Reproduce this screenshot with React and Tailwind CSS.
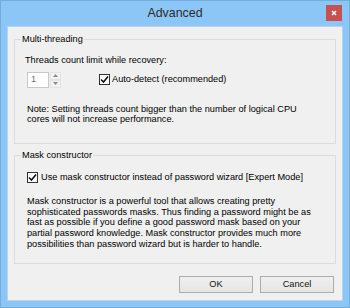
import React from "react";

const font = { fontFamily: '"Liberation Sans", Arial, sans-serif' };

const CheckBox = () => (
  <span className="w-[11px] h-[11px] border border-[#333333] bg-white flex items-center justify-center shrink-0">
    <svg width="9" height="9" viewBox="0 0 9 9">
      <path d="M1 4.5 L3.5 7 L8 1.5" fill="none" stroke="#111" strokeWidth="1.6" />
    </svg>
  </span>
);

const Spinner = () => (
  <div className="flex items-stretch h-[16px]">
    <div className="w-[22px] bg-white border border-[#c5c7cc] text-[#6d6d6d] pl-[3px] flex items-center">1</div>
    <div className="w-[11px] flex flex-col ml-[1px]">
      <div className="flex-1 flex items-center justify-center border border-[#e3e3e3] bg-[#f3f3f3]">
        <svg width="5" height="3" viewBox="0 0 5 3"><path d="M0 3 L2.5 0 L5 3 Z" fill="#8a8a8a" /></svg>
      </div>
      <div className="flex-1 flex items-center justify-center border border-[#e3e3e3] bg-[#f3f3f3]">
        <svg width="5" height="3" viewBox="0 0 5 3"><path d="M0 0 L2.5 3 L5 0 Z" fill="#8a8a8a" /></svg>
      </div>
    </div>
  </div>
);

const Button = ({ children }) => (
  <button className="w-[74px] h-[17px] border border-[#acacac] bg-gradient-to-b from-[#f0f0f0] to-[#e5e5e5] text-[#111] flex items-center justify-center">
    {children}
  </button>
);

export default function App() {
  return (
    <div
      style={font}
      className="w-[350px] h-[308px] bg-[#8cc6f6] border border-[#74acdc] flex flex-col text-[9.2px] leading-[10.8px] text-black"
    >
      {/* title bar */}
      <div className="h-[25px] grid grid-cols-[1fr_auto_1fr] items-start">
        <div />
        <div className="text-[12.4px] text-[#2b2b2b] leading-[25px]">Advanced</div>
        <div className="flex justify-end pr-[7px] pt-[4px]">
          <div className="w-[16px] h-[16px] bg-[#c75050] flex items-center justify-center">
            <svg width="6" height="6" viewBox="0 0 6 6">
              <path d="M1 1 L5 5 M5 1 L1 5" stroke="#fff" strokeWidth="1.5" />
            </svg>
          </div>
        </div>
      </div>

      {/* client area */}
      <div className="mx-[6px] h-[275px] bg-[#f0f0f0] border border-[#b9d3ea] flex flex-col px-[6px]">
        <fieldset className="mt-[7px] border border-[#dcdcdc] px-[6px] h-[110px]">
          <legend className="px-[1px] text-black">Multi-threading</legend>
          <div className="px-[6px] pt-[10px]">
            <div className="-ml-[2px]">Threads count limit while recovery:</div>
            <div className="flex items-center mt-[6px]">
              <Spinner />
              <div className="ml-[38px] flex items-center gap-[2px]">
                <CheckBox />
                <span>Auto-detect (recommended)</span>
              </div>
            </div>
            <p className="mt-[16px]">
              Note: Setting threads count bigger than the number of logical CPU
              <br />
              cores will not increase performance.
            </p>
          </div>
        </fieldset>

        <fieldset className="mt-[6px] border border-[#dcdcdc] px-[6px] h-[114px]">
          <legend className="px-[1px] text-black">Mask constructor</legend>
          <div className="px-[6px] pt-[11px]">
            <div className="flex items-center gap-[3px]">
              <CheckBox />
              <span>Use mask constructor instead of password wizard [Expert Mode]</span>
            </div>
            <p className="mt-[13px]">
              Mask constructor is a powerful tool that allows creating pretty
              <br />
              sophisticated passwords masks. Thus finding a password might be as
              <br />
              fast as possible if you define a good password mask based on your
              <br />
              partial password knowledge. Mask constructor provides much more
              <br />
              possibilities than password wizard but is harder to handle.
            </p>
          </div>
        </fieldset>

        <div className="flex justify-end gap-[7px] mt-[12px] pr-[2px]">
          <Button>OK</Button>
          <Button>Cancel</Button>
        </div>
      </div>
    </div>
  );
}
